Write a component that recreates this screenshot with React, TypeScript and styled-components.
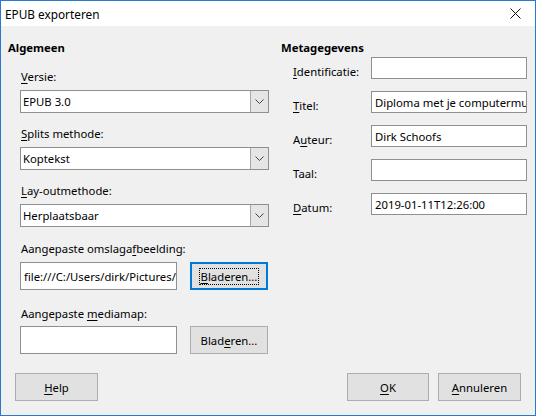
import React from "react";
import styled, { createGlobalStyle } from "styled-components";

const Global = createGlobalStyle`
  html, body { margin: 0; padding: 0; background: #f0f0f0; }
  body { font-family: "Noto Sans", "Liberation Sans", sans-serif; font-size: 11.3px; color: #000; }
  * { box-sizing: border-box; }
`;

const Window = styled.div`
  width: 536px;
  height: 416px;
  border: 1px solid #2b79cf;
  background: #f0f0f0;
  display: flex;
  flex-direction: column;
  overflow: hidden;
`;

const TitleBar = styled.div`
  height: 25px;
  background: #fff;
  display: flex;
  align-items: center;
  justify-content: space-between;
  padding: 0 14px 0 4px;
  font-size: 11.8px;
`;

const CloseIcon = styled.svg`
  width: 11px;
  height: 11px;
  display: block;
`;

const Body = styled.div`
  flex: 1;
  display: flex;
  flex-direction: column;
  padding: 14px 14px 14px 7px;
`;

const Columns = styled.div`
  display: grid;
  grid-template-columns: 261px 1fr;
  column-gap: 12px;
  flex: 1;
`;

const Column = styled.div`
  display: flex;
  flex-direction: column;
`;

const Heading = styled.div`
  font-weight: bold;
  line-height: 16px;
  height: 16px;
`;

const Group = styled.div<{ $indent: number }>`
  display: flex;
  flex-direction: column;
  padding-left: ${(p) => p.$indent}px;
`;

const Field = styled.div<{ $top: number }>`
  display: flex;
  flex-direction: column;
  margin-top: ${(p) => p.$top}px;
`;

const Label = styled.div<{ $gap?: number }>`
  line-height: 16px;
  padding-left: 1px;
  margin-bottom: ${(p) => p.$gap ?? 5}px;
  white-space: nowrap;
`;

const Key = styled.span`
  text-decoration: underline;
  text-underline-offset: 2px;
`;

const SelectBox = styled.div`
  height: 23px;
  background: #fff;
  border: 1px solid #8f8f8f;
  display: flex;
  align-items: stretch;
`;

const SelectText = styled.div`
  flex: 1;
  padding-left: 2px;
  line-height: 21px;
`;

const DropButton = styled.div`
  width: 18px;
  background: #e5e5e5;
  border-left: 1px solid #a8a8a8;
  display: flex;
  align-items: center;
  justify-content: center;
`;

const Row = styled.div<{ $h: number }>`
  display: flex;
  gap: 13px;
  height: ${(p) => p.$h}px;
`;

const TextBox = styled.div<{ $w?: number; $h?: number }>`
  ${(p) => (p.$w ? `width: ${p.$w}px;` : "flex: 1;")}
  height: ${(p) => (p.$h ? `${p.$h}px` : "100%")};
  background: #fff;
  border: 1px solid #8f8f8f;
  padding-left: 3px;
  display: flex;
  align-items: center;
  white-space: nowrap;
  overflow: hidden;
`;

const Button = styled.div<{ $w: number; $focus?: boolean }>`
  width: ${(p) => p.$w}px;
  height: 100%;
  background: #e1e1e1;
  border: ${(p) => (p.$focus ? "2px solid #0078d7" : "1px solid #adadad")};
  display: flex;
  align-items: center;
  justify-content: center;
  white-space: nowrap;
`;

const FocusText = styled.span`
  outline: 1px dotted #000;
  outline-offset: 0px;
  padding: 0 1px;
`;

const MetaGrid = styled.div`
  display: grid;
  grid-template-columns: 78px 156px;
  grid-auto-rows: 22px;
  row-gap: 12px;
  margin-top: 1px;
  padding-left: 12px;
`;

const MetaLabel = styled.div`
  line-height: 16px;
  padding-top: 7px;
  white-space: nowrap;
`;

const Footer = styled.div`
  display: flex;
  height: 28px;
  align-items: stretch;
  padding-left: 7px;
`;

const Spacer = styled.div`
  flex: 1;
`;

const FooterButtons = styled.div`
  display: flex;
  gap: 9px;
`;

const Chevron = () => (
  <svg width="9" height="5" viewBox="0 0 9 5">
    <path d="M0.5 0.5 L4.5 4.5 L8.5 0.5" fill="none" stroke="#444" strokeWidth="1" />
  </svg>
);

const Select = ({ value }: { value: string }) => (
  <SelectBox>
    <SelectText>{value}</SelectText>
    <DropButton>
      <Chevron />
    </DropButton>
  </SelectBox>
);

export default function App() {
  return (
    <>
      <Global />
      <Window>
        <TitleBar>
          <span>EPUB exporteren</span>
          <CloseIcon viewBox="0 0 11 11">
            <path d="M0.5 0.5 L10.5 10.5 M10.5 0.5 L0.5 10.5" stroke="#111" strokeWidth="1" />
          </CloseIcon>
        </TitleBar>
        <Body>
          <Columns>
            <Column>
              <Heading>Algemeen</Heading>
              <Group $indent={12}>
                <Field $top={13}>
                  <Label>
                    <Key>V</Key>ersie:
                  </Label>
                  <Select value="EPUB 3.0" />
                </Field>
                <Field $top={13}>
                  <Label>
                    <Key>S</Key>plits methode:
                  </Label>
                  <Select value="Koptekst" />
                </Field>
                <Field $top={13}>
                  <Label>
                    <Key>L</Key>ay-outmethode:
                  </Label>
                  <Select value="Herplaatsbaar" />
                </Field>
                <Field $top={14}>
                  <Label>
                    Aangepaste omslaga<Key>f</Key>beelding:
                  </Label>
                  <Row $h={28}>
                    <TextBox $w={157}>file:///C:/Users/dirk/Pictures/</TextBox>
                    <Button $w={78} $focus>
                      <FocusText>
                        <Key>B</Key>laderen...
                      </FocusText>
                    </Button>
                  </Row>
                </Field>
                <Field $top={16}>
                  <Label $gap={4}>
                    Aangepaste <Key>m</Key>ediamap:
                  </Label>
                  <Row $h={28}>
                    <TextBox $w={157} />
                    <Button $w={78}>
                      <span>
                        Blad<Key>e</Key>ren...
                      </span>
                    </Button>
                  </Row>
                </Field>
              </Group>
            </Column>
            <Column>
              <Heading>Metagegevens</Heading>
              <MetaGrid>
                <MetaLabel>
                  <Key>I</Key>dentificatie:
                </MetaLabel>
                <TextBox />
                <MetaLabel>
                  <Key>T</Key>itel:
                </MetaLabel>
                <TextBox>Diploma met je computermuis</TextBox>
                <MetaLabel>
                  A<Key>u</Key>teur:
                </MetaLabel>
                <TextBox>Dirk Schoofs</TextBox>
                <MetaLabel>Taal:</MetaLabel>
                <TextBox />
                <MetaLabel>
                  <Key>D</Key>atum:
                </MetaLabel>
                <TextBox>2019-01-11T12:26:00</TextBox>
              </MetaGrid>
            </Column>
          </Columns>
          <Footer>
            <Button $w={83}>
              <span>
                <Key>H</Key>elp
              </span>
            </Button>
            <Spacer />
            <FooterButtons>
              <Button $w={82}>
                <span>
                  <Key>O</Key>K
                </span>
              </Button>
              <Button $w={83}>
                <span>
                  <Key>A</Key>nnuleren
                </span>
              </Button>
            </FooterButtons>
          </Footer>
        </Body>
      </Window>
    </>
  );
}
